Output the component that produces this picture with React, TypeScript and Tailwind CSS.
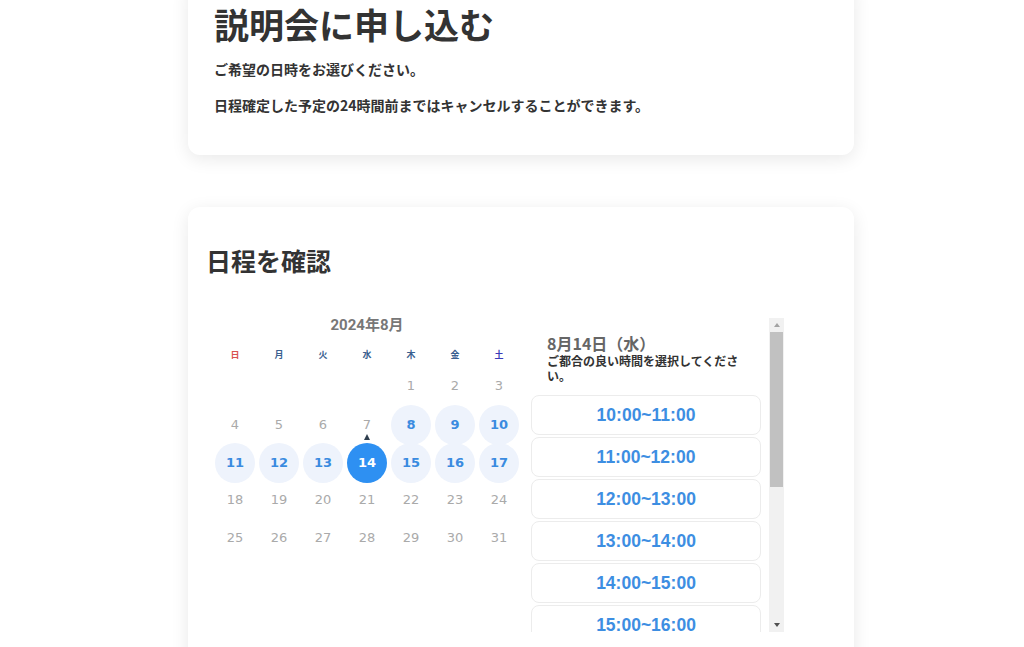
import React from 'react';

const jp = { fontFamily: '"Noto Sans CJK JP", "Noto Sans", sans-serif' };
const num = { fontFamily: '"DejaVu Sans", "Noto Sans CJK JP", sans-serif' };
const arial = { fontFamily: '"Liberation Sans", Arial, sans-serif' };

const weekdays = [
  { label: '日', color: 'text-[#d9534f]' },
  { label: '月', color: 'text-[#3a5f8f]' },
  { label: '火', color: 'text-[#3a5f8f]' },
  { label: '水', color: 'text-[#3a5f8f]' },
  { label: '木', color: 'text-[#3a5f8f]' },
  { label: '金', color: 'text-[#3a5f8f]' },
  { label: '土', color: 'text-[#3a3ab8]' },
];

const available = [8, 9, 10, 11, 12, 13, 15, 16, 17];
const selected = 14;
const today = 7;

const slots = [
  '10:00~11:00',
  '11:00~12:00',
  '12:00~13:00',
  '13:00~14:00',
  '14:00~15:00',
  '15:00~16:00',
  '16:00~17:00',
];

function Calendar() {
  // August 2024 starts on Thursday
  const cells: (number | null)[] = [null, null, null, null];
  for (let d = 1; d <= 31; d++) cells.push(d);
  const rows: (number | null)[][] = [];
  for (let i = 0; i < cells.length; i += 7) rows.push(cells.slice(i, i + 7));

  return (
    <div className="w-[308px] ml-[7px]">
      <div className="text-center text-[15px] font-bold text-[#777] leading-[20px]" style={{ fontFamily: 'Roboto, "Noto Sans CJK JP", sans-serif' }}>
        2024年8月
      </div>
      <div className="grid grid-cols-7 mt-[12px] h-[16px] items-center">
        {weekdays.map((w) => (
          <div key={w.label} className={`text-center text-[9px] font-bold ${w.color}`} style={jp}>
            {w.label}
          </div>
        ))}
      </div>
      <div className="mt-[4px]">
        {rows.map((row, ri) => (
          <div key={ri} className="grid grid-cols-7 h-[38px]">
            {row.map((d, ci) => (
              <div key={ci} className="flex items-center justify-center relative">
                {d === null ? null : d === selected ? (
                  <div className="w-[40px] h-[40px] rounded-full bg-[#2e90f2] text-white font-bold text-[13px] flex items-center justify-center" style={num}>
                    {d}
                  </div>
                ) : available.includes(d) ? (
                  <div className="w-[40px] h-[40px] rounded-full bg-[#eef3fc] text-[#3a8be0] font-bold text-[13px] flex items-center justify-center" style={num}>
                    {d}
                  </div>
                ) : (
                  <div className="text-[13px] text-[#aaaaaa]" style={num}>
                    {d}
                  </div>
                )}
                {d === today && (
                  <div className="absolute left-1/2 -translate-x-1/2 top-[29px] w-0 h-0 border-l-[3px] border-r-[3px] border-b-[6px] border-l-transparent border-r-transparent border-b-[#2f3e4e]" />
                )}
              </div>
            ))}
          </div>
        ))}
      </div>
    </div>
  );
}

function TimePanel() {
  return (
    <div className="flex h-[314px] mt-[3px] ml-[9px]">
      <div className="w-[239px] pr-[8px] overflow-hidden">
        <div className="pl-[17px] pt-[15px] pb-[12px]">
          <div className="text-[16px] font-bold text-[#666] leading-[20px]" style={jp}>
            8月14日（水）
          </div>
          <div className="w-[205px] text-[12px] font-bold text-[#333] leading-[15px]" style={jp}>
            ご都合の良い時間を選択してください。
          </div>
        </div>
        <div className="flex flex-col gap-[2px] pl-[1px]">
          {slots.map((s) => (
            <div
              key={s}
              className="h-[40px] shrink-0 rounded-lg border border-[#ececec] bg-white flex items-center justify-center text-[17.5px] font-bold text-[#3d8ee2]"
              style={arial}
            >
              {s}
            </div>
          ))}
        </div>
      </div>
      <div className="w-[15px] bg-[#f1f1f1] flex flex-col">
        <div className="h-[14px] flex items-center justify-center">
          <div className="w-0 h-0 border-l-[3px] border-r-[3px] border-b-[4px] border-l-transparent border-r-transparent border-b-[#a3a3a3]" />
        </div>
        <div className="h-[155px] mx-[1px] bg-[#c1c1c1]" />
        <div className="flex-1" />
        <div className="h-[14px] flex items-center justify-center">
          <div className="w-0 h-0 border-l-[3px] border-r-[3px] border-t-[4px] border-l-transparent border-r-transparent border-t-[#505050]" />
        </div>
      </div>
    </div>
  );
}

export default function App() {
  return (
    <div className="min-h-screen bg-white flex flex-col items-center pb-[60px]" style={jp}>
      <div className="w-[666px] -mt-[20px] ml-[18px] bg-white rounded-xl shadow-[0_4px_18px_rgba(0,0,0,0.09)] pl-[26px] pt-[24px] pb-[40px]">
        <h1 className="text-[35px] font-bold text-[#333] leading-[40px]">説明会に申し込む</h1>
        <p className="mt-[15px] text-[14px] font-bold text-[#333] leading-[20px]">ご希望の日時をお選びください。</p>
        <p className="mt-[16px] text-[14px] font-bold text-[#333] leading-[20px]">
          日程確定した予定の24時間前まではキャンセルすることができます。
        </p>
      </div>
      <div className="w-[666px] ml-[18px] mt-[52px] bg-white rounded-xl shadow-[0_4px_18px_rgba(0,0,0,0.09)] pl-[18px] pt-[37px] pb-[40px]">
        <h2 className="text-[25px] font-bold text-[#333] leading-[32px]">日程を確認</h2>
        <div className="flex items-start mt-[39px]">
          <Calendar />
          <TimePanel />
        </div>
      </div>
    </div>
  );
}
